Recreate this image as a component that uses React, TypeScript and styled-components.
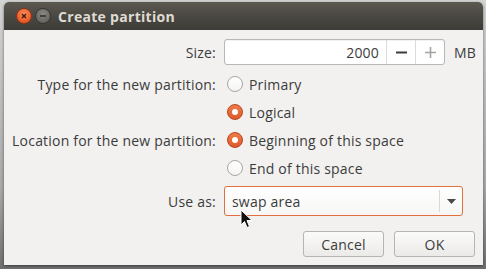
import React from 'react'
import styled, { createGlobalStyle } from 'styled-components'

const GlobalStyle = createGlobalStyle`
  html, body {
    margin: 0;
    padding: 0;
    width: 486px;
    height: 269px;
    overflow: hidden;
    background: linear-gradient(180deg, #d4d4d4 0%, #a9a9a9 70%, #6f6f6f 100%);
  }
  body {
    font-family: "Open Sans", "Noto Sans", "DejaVu Sans", sans-serif;
  }
`

const SBackdrop = styled.div`
  position: relative;
  width: 486px;
  height: 269px;
  padding: 2px 3px 4px 4px;
  box-sizing: border-box;
`

const SWindow = styled.div`
  display: flex;
  flex-direction: column;
  width: 479px;
  height: 263px;
  border-radius: 5px 5px 0 0;
  overflow: hidden;
  background-color: #f2f1f0;
  box-shadow: 0 1px 3px rgba(0, 0, 0, 0.5);
`

const STitleBar = styled.div`
  display: flex;
  align-items: center;
  height: 28px;
  flex-shrink: 0;
  padding: 0 0 0 8px;
  background: linear-gradient(180deg, #5b5850 0%, #4a4842 50%, #3d3c37 100%);
`

const SWinButton = styled.div<{ $kind: 'close' | 'min' }>`
  display: flex;
  align-items: center;
  justify-content: center;
  width: 16px;
  height: 16px;
  margin-left: 3px;
  border-radius: 50%;
  box-sizing: border-box;
  border: 1px solid ${({ $kind }) => ($kind === 'close' ? '#8f3416' : '#35342f')};
  background: ${({ $kind }) =>
    $kind === 'close'
      ? 'radial-gradient(circle at 50% 35%, #f98d5f 0%, #ee6331 55%, #d34a1b 100%)'
      : 'radial-gradient(circle at 50% 35%, #8a8882 0%, #6d6b65 60%, #5a5853 100%)'};

  &:first-child {
    margin-left: 4px;
  }
`

const STitle = styled.span`
  margin-left: 7px;
  font-size: 14px;
  font-weight: 700;
  color: #dfdbd2;
  letter-spacing: 0.3px;
`

const SBody = styled.div`
  display: flex;
  flex-direction: column;
  padding: 4px 8px 0 0;
  font-size: 14px;
  letter-spacing: 0.2px;
  color: #3c3c3c;
`

const SForm = styled.div`
  display: grid;
  grid-template-columns: 212px 1fr;
  grid-template-rows: 36px repeat(4, 28px) 38px;
  column-gap: 8px;
  align-items: center;
`

const SLabel = styled.div`
  text-align: right;
`

const SControl = styled.div`
  display: flex;
  align-items: center;
`

const SSpin = styled.div`
  display: flex;
  width: 221px;
  height: 26px;
  box-sizing: border-box;
  border: 1px solid #b8b7b2;
  border-radius: 3px;
  background: #ffffff;
  box-shadow: inset 0 1px 1px rgba(0, 0, 0, 0.06);
`

const SSpinValue = styled.div`
  flex: 1;
  display: flex;
  align-items: center;
  justify-content: flex-end;
  padding-right: 7px;
`

const SSpinButton = styled.div`
  display: flex;
  align-items: center;
  justify-content: center;
  width: 28px;
  border-left: 1px solid #dcdbd8;
`

const SUnit = styled.span`
  margin-left: 9px;
`

const SRadio = styled.span<{ $checked?: boolean }>`
  position: relative;
  display: inline-block;
  width: 16px;
  height: 16px;
  margin-left: 3px;
  margin-right: 6px;
  border-radius: 50%;
  box-sizing: border-box;
  border: 1px solid ${({ $checked }) => ($checked ? '#b4461c' : '#a7a6a1')};
  background: ${({ $checked }) =>
    $checked
      ? 'linear-gradient(180deg, #f0794a 0%, #e05a2a 100%)'
      : 'linear-gradient(180deg, #ffffff 0%, #f4f4f3 100%)'};

  &::after {
    content: '';
    display: ${({ $checked }) => ($checked ? 'block' : 'none')};
    position: absolute;
    left: 4px;
    top: 4px;
    width: 6px;
    height: 6px;
    border-radius: 50%;
    background: #ffffff;
  }
`

const SCombo = styled.div`
  display: flex;
  align-items: center;
  width: 239px;
  height: 30px;
  box-sizing: border-box;
  border: 1px solid #e2703f;
  border-radius: 3px;
  background: linear-gradient(180deg, #ffffff 0%, #f6f6f5 100%);
`

const SComboText = styled.span`
  flex: 1;
  padding-left: 7px;
`

const SComboArrow = styled.div`
  display: flex;
  align-items: center;
  justify-content: center;
  width: 22px;
  height: 22px;
  border-left: 1px solid #d9d8d5;
`

const SActions = styled.div`
  display: flex;
  justify-content: flex-end;
  gap: 10px;
  margin-top: 11px;
`

const SButton = styled.div`
  display: flex;
  align-items: center;
  justify-content: center;
  width: 81px;
  height: 26px;
  box-sizing: border-box;
  border: 1px solid #b6b5b0;
  border-radius: 3px;
  background: linear-gradient(180deg, #fbfbfa 0%, #ebeae8 100%);
`

const SCursor = styled.svg`
  position: absolute;
  left: 240px;
  top: 209px;
`

const App = () => {
  return (
    <>
      <GlobalStyle />
      <SBackdrop>
        <SWindow>
          <STitleBar>
            <SWinButton $kind="close">
              <svg width="8" height="8" viewBox="0 0 8 8">
                <path d="M2 2 L6 6 M6 2 L2 6" stroke="#3a1a0c" strokeWidth="1.3" />
              </svg>
            </SWinButton>
            <SWinButton $kind="min">
              <svg width="8" height="8" viewBox="0 0 8 8">
                <path d="M1 4 H7" stroke="#2e2d29" strokeWidth="1.4" />
              </svg>
            </SWinButton>
            <STitle>Create partition</STitle>
          </STitleBar>

          <SBody>
            <SForm>
              <SLabel>Size:</SLabel>
              <SControl>
                <SSpin>
                  <SSpinValue>2000</SSpinValue>
                  <SSpinButton>
                    <svg width="11" height="11" viewBox="0 0 11 11">
                      <path d="M0 5.5 H11" stroke="#3c3c3c" strokeWidth="2" />
                    </svg>
                  </SSpinButton>
                  <SSpinButton>
                    <svg width="11" height="11" viewBox="0 0 11 11">
                      <path d="M0 5.5 H11 M5.5 0 V11" stroke="#a5a4a0" strokeWidth="1.6" />
                    </svg>
                  </SSpinButton>
                </SSpin>
                <SUnit>MB</SUnit>
              </SControl>

              <SLabel>Type for the new partition:</SLabel>
              <SControl>
                <SRadio />
                Primary
              </SControl>

              <SLabel />
              <SControl>
                <SRadio $checked />
                Logical
              </SControl>

              <SLabel>Location for the new partition:</SLabel>
              <SControl>
                <SRadio $checked />
                Beginning of this space
              </SControl>

              <SLabel />
              <SControl>
                <SRadio />
                End of this space
              </SControl>

              <SLabel>Use as:</SLabel>
              <SControl>
                <SCombo>
                  <SComboText>swap area</SComboText>
                  <SComboArrow>
                    <svg width="9" height="5" viewBox="0 0 9 5">
                      <path d="M0 0 H9 L4.5 5 Z" fill="#4a4a48" />
                    </svg>
                  </SComboArrow>
                </SCombo>
              </SControl>
            </SForm>

            <SActions>
              <SButton>Cancel</SButton>
              <SButton>OK</SButton>
            </SActions>
          </SBody>
        </SWindow>

        <SCursor width="13" height="20" viewBox="0 0 13 20">
          <path
            d="M1 1 L1 16 L4.5 12.5 L7 18.5 L9.5 17.5 L7 11.5 L12 11.5 Z"
            fill="#111"
            stroke="#fff"
            strokeWidth="1"
            strokeLinejoin="round"
          />
        </SCursor>
      </SBackdrop>
    </>
  )
}

export default App
